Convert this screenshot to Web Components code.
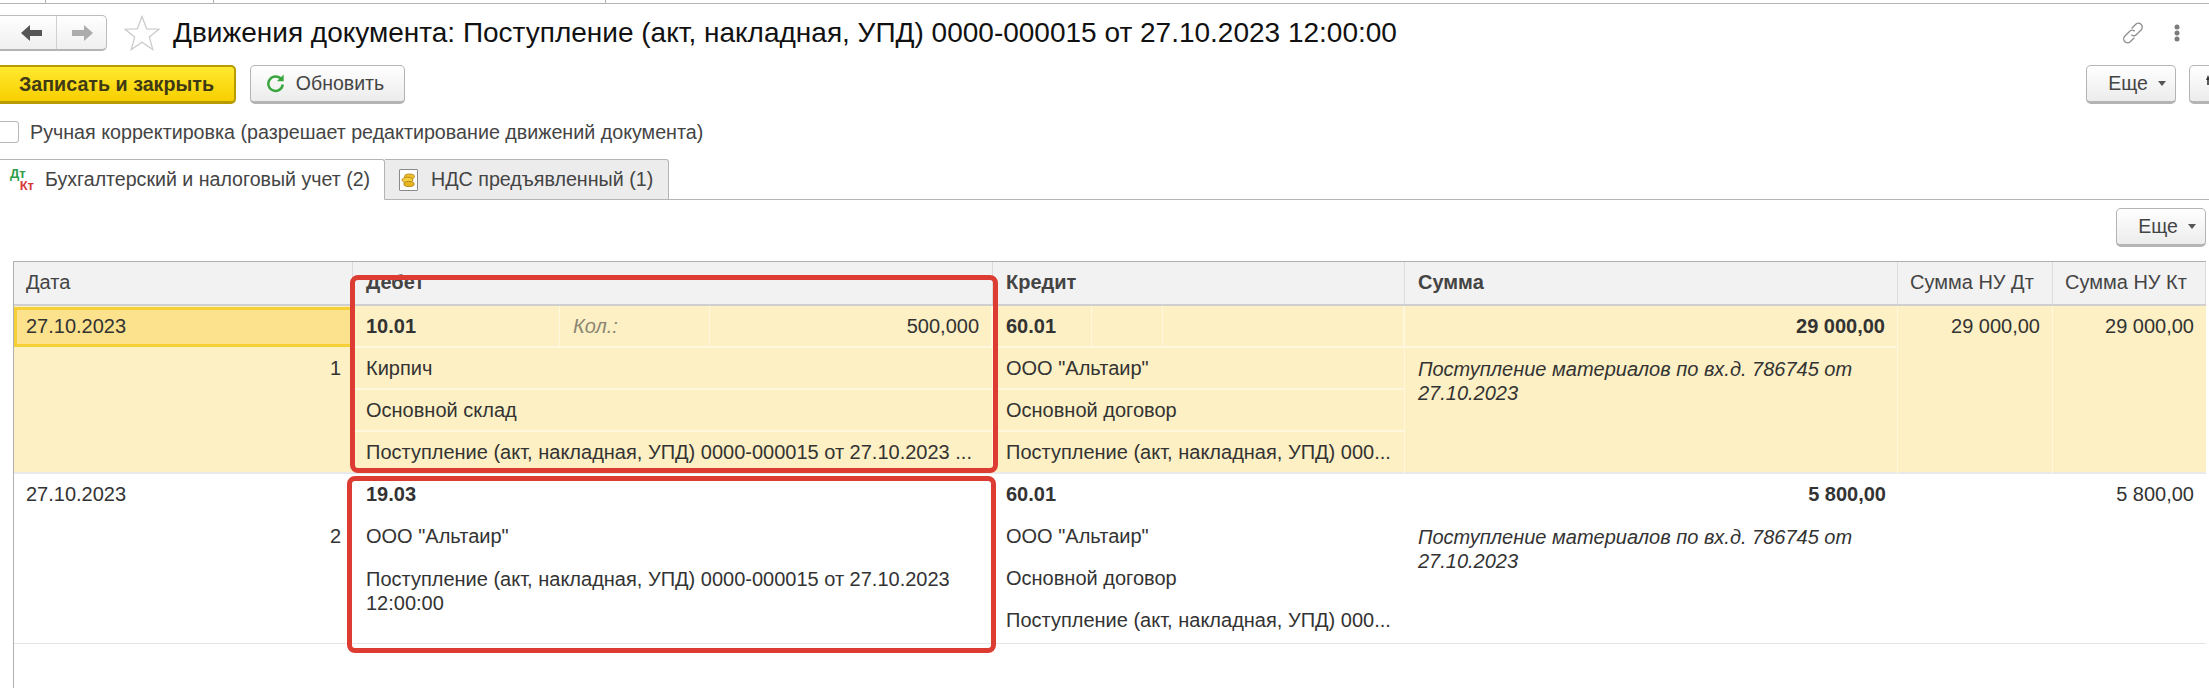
<!DOCTYPE html>
<html lang="ru"><head><meta charset="utf-8"><title>Движения документа</title>
<style>
html,body{margin:0;padding:0;background:#fff;overflow:hidden}
body{width:2209px;height:688px;font:19.7px "Liberation Sans",Arial,sans-serif;color:#333;display:flex;flex-direction:column}
svg{display:block}
</style></head><body>
<top-strip></top-strip>
<title-bar>Движения документа: Поступление (акт, накладная, УПД) 0000-000015 от 27.10.2023 12:00:00</title-bar>
<command-bar>
  <ui-button primary style="margin-left:-8px;width:244px">Записать и закрыть</ui-button>
  <ui-button style="width:155px;margin-left:14px;padding-right:5px">
    <svg slot="icon" width="19" height="19" viewBox="0 0 19 19"><path d="M15.200 5.300A7.200 7.200 0 1 0 16.700 10.500" fill="none" stroke="#3aa63f" stroke-width="2.500"/><path d="M10.800 7.200h6.900V.6z" fill="#3aa63f"/></svg>
    Обновить</ui-button>
  <ui-button menu style="margin-left:auto;width:90px">Еще</ui-button>
  <ui-button style="margin-left:13px;width:40px;margin-right:-20px"><svg width="40" height="12" viewBox="0 0 40 12" style="margin:-8px 0 0 0"><path d="M17 6 19 1l2 5h-1.200v5h-1.600V6z" fill="#333"/></svg></ui-button>
</command-bar>
<check-row>Ручная корректировка (разрешает редактирование движений документа)</check-row>
<tab-bar>
  <tab-item active>
    <dt-icon slot="icon"></dt-icon>Бухгалтерский и налоговый учет (2)</tab-item>
  <tab-item>
    <coin-icon slot="icon"></coin-icon>НДС предъявленный (1)</tab-item>
</tab-bar>
<command-bar style="margin-top:8px;padding-right:3px"><ui-button menu style="margin-left:auto;width:90px">Еще</ui-button></command-bar>
<move-table>
  <move-head>
    <span>Дата</span><b>Дебет</b><b>Кредит</b><b>Сумма</b><span class="c">Сумма НУ Дт</span><span class="c">Сумма НУ Кт</span>
  </move-head>
  <move-row selected>
    <move-col><date-cell active>27.10.2023</date-cell><move-line end>1</move-line></move-col>
    <move-col line>
      <move-line line parts="207px 150px 1fr"><b>10.01</b><i>Кол.:</i><span style="text-align:right">500,000</span></move-line>
      <move-line line>Кирпич</move-line>
      <move-line line>Основной склад</move-line>
      <move-line>Поступление (акт, накладная, УПД) 0000-000015 от 27.10.2023 ...</move-line>
    </move-col>
    <move-col line>
      <move-line line parts="99px 71px 1fr"><b>60.01</b><span></span><span></span></move-line>
      <move-line line>ООО "Альтаир"</move-line>
      <move-line line>Основной договор</move-line>
      <move-line>Поступление (акт, накладная, УПД) 000...</move-line>
    </move-col>
    <move-col line>
      <move-line line end><b>29 000,00</b></move-line>
      <note-text>Поступление материалов по вх.д. 786745 от 27.10.2023</note-text>
    </move-col>
    <move-col line><move-line end>29 000,00</move-line></move-col>
    <move-col><move-line end>29 000,00</move-line></move-col>
  </move-row>
  <move-row second>
    <move-col><date-cell>27.10.2023</date-cell><move-line end>2</move-line></move-col>
    <move-col>
      <move-line><b>19.03</b></move-line>
      <move-line>ООО "Альтаир"</move-line>
      <wrap-text>Поступление (акт, накладная, УПД) 0000-000015 от 27.10.2023 12:00:00</wrap-text>
    </move-col>
    <move-col>
      <move-line><b>60.01</b></move-line>
      <move-line>ООО "Альтаир"</move-line>
      <move-line>Основной договор</move-line>
      <move-line>Поступление (акт, накладная, УПД) 000...</move-line>
    </move-col>
    <move-col>
      <move-line end><b>5 800,00</b></move-line>
      <note-text>Поступление материалов по вх.д. 786745 от 27.10.2023</note-text>
    </move-col>
    <move-col></move-col>
    <move-col><move-line end>5 800,00</move-line></move-col>
  </move-row>
</move-table>
<red-box style="left:350px;top:275px;width:648px;height:198px"></red-box>
<red-box style="left:347px;top:476px;width:649px;height:177px"></red-box>
<script>
const def=(name,css,html)=>customElements.define(name,class extends HTMLElement{
  constructor(){super();this.attachShadow({mode:'open'}).innerHTML=`<style>${css}</style>${html}`;}
});
const FONT='"Liberation Sans",Arial,sans-serif';

def('top-strip',`:host{display:flex;height:4px;box-sizing:border-box;border-bottom:1px solid #b4b4b4;flex:none}
i{display:block;height:3px;border-right:1px solid #b4b4b4;box-sizing:border-box}`,
`<i style="width:46px"></i><i style="width:168px"></i><i style="width:392px"></i>`);

def('title-bar',`:host{display:flex;align-items:center;height:61px;flex:none;box-sizing:border-box;padding-bottom:3px;font-size:28px;color:#111}
.nav{display:flex;height:36px;width:115px;margin-left:-8px;box-sizing:border-box;border:1px solid #bcbcbc;border-bottom:2px solid #b4b4b4;border-radius:5px;background:linear-gradient(#fff,#efefef)}
.nav div{flex:1;display:flex;align-items:center;justify-content:center}
.nav div+div{border-left:1px solid #d0d0d0}
.star{margin-left:17px;margin-right:13px}
.t{white-space:nowrap;flex:1}
.link{margin-right:29px}
.dots{margin-right:29px}`,
`<div class="nav"><div style="padding-left:14px"><svg width="22" height="18" viewBox="0 0 22 18"><path d="M0 9 9 1v5h12v6H9v5z" fill="#555"/></svg></div><div><svg width="22" height="18" viewBox="0 0 22 18"><path d="M22 9 13 1v5H1v6h12v5z" fill="#acacac"/></svg></div></div>
<svg class="star" width="36" height="36" viewBox="0 0 36 36"><path d="M18 1.500 22.600 13.800 35 14.200 25.300 22 28.800 34.500 18 27.200 7.200 34.500 10.700 22 1 14.200 13.400 13.800z" fill="#fff" stroke="#c9c9c9" stroke-width="1.200"/></svg>
<div class="t"><slot></slot></div>
<svg class="link" width="24" height="24" viewBox="0 0 24 24" fill="none" stroke="#8c8c8c" stroke-width="1.300" stroke-linecap="round"><path d="M11 7 14.500 3.500a3.800 3.800 0 0 1 5.800 5.200L15.500 13.500a3.800 3.800 0 0 1-4.800.6"/><path d="M13 17 9.500 20.500a3.800 3.800 0 0 1-5.800-5.200L8.500 10.500a3.800 3.800 0 0 1 4.800-.6"/></svg>
<svg class="dots" width="6" height="18" viewBox="0 0 6 18" fill="#7c7c7c"><circle cx="3" cy="3" r="2.500"/><circle cx="3" cy="9" r="2.500"/><circle cx="3" cy="15" r="2.500"/></svg>`);

def('command-bar',`:host{display:flex;height:39px;flex:none;align-items:stretch}`,`<slot></slot>`);

def('ui-button',`:host{display:flex;align-items:center;justify-content:center;gap:11px;box-sizing:border-box;height:39px;border:1px solid #b4b4b4;border-bottom:3px solid #b4b4b4;border-radius:5px;background:linear-gradient(#fff,#ececec);color:#444;font-size:19.5px;white-space:nowrap}
:host([primary]){background:linear-gradient(#ffe92f,#f7cf00);border:2px solid #b79b00;border-bottom:3px solid #b79b00;color:#3f3a14;font-weight:bold;font-size:19.700px;padding-left:5px}
.c{display:none;width:0;height:0;border:4px solid transparent;border-top:5px solid #555;border-bottom:0;margin-left:-1px}
:host([menu]) .c{display:block}
:host([menu]){padding-left:12px}`,
`<slot name="icon"></slot><span><slot></slot></span><i class="c"></i>`);

def('check-row',`:host{display:flex;align-items:center;gap:11px;height:22px;margin-top:17px;margin-left:-8px;flex:none;color:#444;white-space:nowrap}
i{display:block;width:27px;height:22px;box-sizing:border-box;border:1px solid #b8b8b8;border-radius:3px;background:#fff}`,`<i></i><slot></slot>`);

def('tab-bar',`:host{display:flex;height:41px;margin-top:16px;flex:none;box-sizing:border-box;border-bottom:1px solid #b4b4b4;position:relative}`,`<slot></slot>`);
def('tab-item',`:host{display:flex;align-items:center;height:41px;box-sizing:border-box;border:1px solid #b4b4b4;border-left:0;border-radius:0 3px 0 0;background:#ececec;color:#444;padding-left:14px;width:284px;gap:13px;white-space:nowrap;font-size:19.700px}
:host([active]){background:#fff;width:385px;border-bottom:1px solid #fff;padding-left:10px;gap:11px;font-size:19.600px}`,`<slot name="icon"></slot><slot></slot>`);
def('dt-icon',`:host{display:grid;width:24px;height:24px;font:bold 13px/12px ${FONT}}
.a{color:#2f9e49}.b{color:#d9383a;justify-self:end}`,`<span class="a">Дт</span><span class="b">Кт</span>`);
def('coin-icon',`:host{display:block;width:19px;height:22px;box-sizing:border-box;border:1px solid #8a8a8a;background:#fff;border-radius:1px}
svg{display:block}`,`<svg width="17" height="20" viewBox="0 0 17 20"><ellipse cx="9.500" cy="6.500" rx="5" ry="2.500" fill="#efbd2a" stroke="#a98012" stroke-width=".8"/><ellipse cx="7.500" cy="10" rx="5.500" ry="2.800" fill="#f5cd3e" stroke="#a98012" stroke-width=".8"/><ellipse cx="9" cy="14" rx="5.200" ry="2.600" fill="#e9b31f" stroke="#a98012" stroke-width=".8"/></svg>`);

def('move-table',`:host{display:block;flex:none;margin:14px 0 0 13px;width:2193px;height:427px;box-sizing:border-box;border-left:1px solid #b0b0b0;border-top:1px solid #b0b0b0;font-size:20px}`,`<slot></slot>`);
def('move-head',`:host{display:grid;grid-template-columns:339px 640px 412px 493px 155px 153px;height:44px;box-sizing:border-box;background:#f2f2f2;border-bottom:2px solid #cfcfcf;color:#444;padding-bottom:2px}
::slotted(*){display:flex;align-items:center;padding-left:13px;border-right:1px solid #dcdcdc;font-style:normal;white-space:nowrap;margin-bottom:-2px;padding-bottom:2px}
::slotted(span){padding-left:12px}`,`<slot></slot>`);
def('move-row',`:host{display:grid;grid-template-columns:339px 640px 412px 493px 155px 153px;height:168px;box-sizing:border-box;border-bottom:2px solid #eee;--line:transparent}
:host([selected]){background:#fdf0c4;--line:#fff7de;border-bottom:2px solid #e9e9e9}
:host([second]){height:170px;border-bottom:1px solid #e4e4e4}`,`<slot></slot>`);
def('move-col',`:host{display:block;min-width:0;box-sizing:border-box}
:host([line]){border-right:1px solid var(--line)}`,`<slot></slot>`);
customElements.define('move-line',class extends HTMLElement{
  constructor(){super();this.attachShadow({mode:'open'}).innerHTML=`<style>
:host{display:block;height:42px;line-height:41px;box-sizing:border-box;padding:0 12px 0 13px;white-space:nowrap}
:host([line]){border-bottom:2px solid var(--line)}
:host([end]){text-align:right}
:host([parts]){display:grid;padding:0;align-items:stretch;line-height:40px}
:host([parts]) ::slotted(*){display:block;line-height:40px;padding:0 12px 0 13px;border-right:1px solid var(--line)}
::slotted(i){color:#8b8672}
</style><slot></slot>`;}
  connectedCallback(){const p=this.getAttribute('parts');if(p)this.style.gridTemplateColumns=p;}
});
def('date-cell',`:host{display:flex;align-items:center;height:42px;box-sizing:border-box;padding:0 12px 2px}
:host([active]){background:#fde28d;border:3px solid #f7d036;border-right:0;padding:0 12px 2px 9px;height:40px;margin:1px 0}`,`<slot></slot>`);
def('note-text',`:host{display:block;font-style:italic;line-height:24px;padding:9px 40px 0 13px}`,`<slot></slot>`);
def('wrap-text',`:host{display:block;line-height:24px;padding:9px 30px 0 13px}`,`<slot></slot>`);
def('red-box',`:host{position:absolute;box-sizing:border-box;border:5px solid #dc3c32;border-radius:8px;pointer-events:none}`,``);
</script>
</body></html>
